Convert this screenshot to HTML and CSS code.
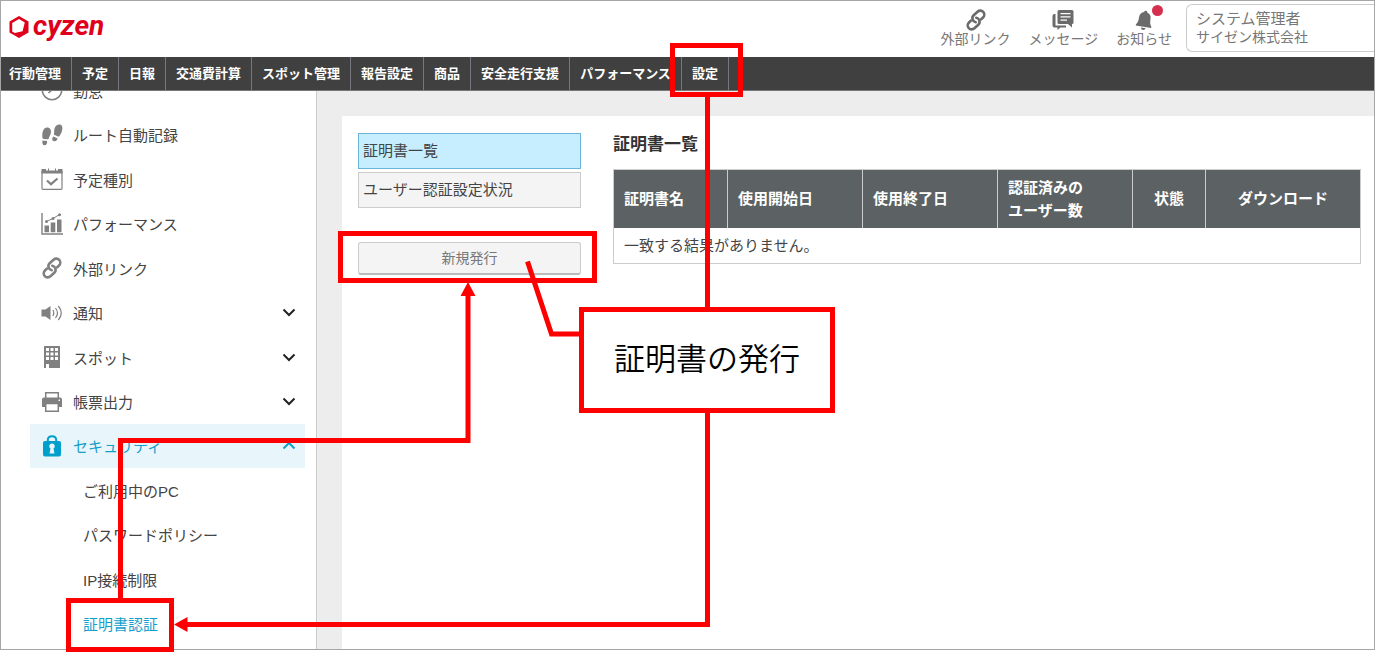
FILE: index.html
```html
<!DOCTYPE html>
<html lang="ja">
<head>
    <meta charset="UTF-8">
    <meta name="viewport" content="width=device-width, initial-scale=1.0">
    <title>cyzen</title>
    <link rel="stylesheet" href="styles.css">
</head>
<body>
    <!-- Shared icons -->
    <svg class="defs" width="0" height="0">
        <symbol id="icon-link" viewBox="0 0 22 22">
            <g fill="none" stroke="currentColor" stroke-width="2.600" stroke-linecap="round" transform="translate(11 11) rotate(-43)">
                <path d="M4.300 3H6.800A4 4 0 0 0 6.800 -5H1.500A4 4 0 0 0 -1.700 1.400"/>
                <path d="M-4.300 -3H-6.800A4 4 0 0 0 -6.800 5H-1.500A4 4 0 0 0 1.700 -1.400"/>
            </g>
        </symbol>
        <symbol id="icon-down" viewBox="0 0 14 9">
            <path d="M1.500 1.500l5.500 5.500 5.500-5.500" fill="none" stroke="currentColor" stroke-width="2"/>
        </symbol>
    </svg>

    <div class="page">
        <header class="header">
            <a class="logo" href="#">
                <svg width="20" height="22" viewBox="0 0 20 22">
                    <path fill="currentColor" fill-rule="evenodd" d="M10 0l9.500 5.500v11L10 22 .5 16.500v-11zM10 3L3.200 7v8.600l2.600 1.500 7.800-1.800 2.200-8.700z"/>
                </svg>
                <span>cyzen</span>
            </a>
            <div class="tools">
                <a class="tool" href="#">
                    <svg width="22" height="22"><use href="#icon-link"/></svg>
                    <span>外部リンク</span>
                </a>
                <a class="tool" href="#">
                    <svg width="22" height="22" viewBox="0 0 22 22">
                        <path fill="currentColor" d="M2 5h1.500v11.500H14v2H8.500L5.500 21v-2.500H2.500Q.5 18.500.5 16.500v-9Q.5 5 2 5z"/>
                        <path fill="currentColor" fill-rule="evenodd" d="M7 1h13q1.500 0 1.500 1.500v11q0 1.500-1.500 1.500v3.500L16 15H7q-1.500 0-1.500-1.500v-11Q5.500 1 7 1zM8.500 4v1.300h10V4zm0 3.200v1.300h10V7.200zm0 3.200v1.300h6.500v-1.300z"/>
                    </svg>
                    <span>メッセージ</span>
                </a>
                <a class="tool" href="#">
                    <svg width="22" height="22" viewBox="0 0 22 22">
                        <g fill="currentColor" transform="rotate(9 11 11)">
                            <path d="M11.500 1.500q1.500 0 1.600 1.600c3 .8 4.200 3 4.200 6 0 4 .4 5.500 2 7.400v1.200H3.700v-1.200c1.600-1.900 2-3.400 2-7.400 0-3 1.200-5.200 4.200-6q.1-1.600 1.600-1.600z"/>
                            <path d="M9 18.800h5q-.6 2.200-2.500 2.200T9 18.800z"/>
                        </g>
                    </svg>
                    <span>お知らせ</span>
                    <i class="dot"></i>
                </a>
                <a class="user" href="#">
                    <span class="user-name">システム管理者</span>
                    <span>サイゼン株式会社</span>
                </a>
            </div>
        </header>

        <nav class="nav">
            <a href="#">行動管理</a>
            <a href="#">予定</a>
            <a href="#">日報</a>
            <a href="#">交通費計算</a>
            <a href="#">スポット管理</a>
            <a href="#">報告設定</a>
            <a href="#">商品</a>
            <a href="#">安全走行支援</a>
            <a href="#">パフォーマンス</a>
            <a href="#">設定</a>
        </nav>

        <div class="body">
            <aside class="sidebar">
                <ul class="menu">
                    <li><a class="row" href="#">
                        <svg class="icon" viewBox="0 0 22 22"><g fill="none" stroke="currentColor" stroke-width="1.600"><circle cx="11" cy="11" r="9.700"/><path d="M11 4v7.500M7.500 14l5-4.500"/></g></svg>
                        <span>勤怠</span>
                    </a></li>
                    <li><a class="row" href="#">
                        <svg class="icon" viewBox="0 0 22 22"><g fill="currentColor">
                            <path d="M5.500 3.600c2.600-.5 4.600 1.200 4.500 4.200-.1 2.600-1.500 4.300-2.300 6.600-.2.800-1 1-1.800.9l-3.200-.4c-.9-.1-1.300-.7-1.300-1.500C1 9.500 1.800 4.400 5.500 3.600z"/>
                            <path d="M1.500 16.500l4.600.6c.3 2.600-.7 4.300-2.500 4.200-1.900-.1-2.600-2-2.100-4.800z"/>
                            <path d="M18.300.4c2.500-.1 3.400 2.200 3 5.200-.3 2.600-1.500 4.400-2.800 6.300-.4.700-1 .8-1.700.5l-3-1.300c-.8-.3-1-.9-.8-1.700.5-1.900-.1-3.200.6-5.200.7-2.200 2.600-3.700 4.700-3.800z"/>
                            <path d="M12.200 12.400l4.300 1.900c-.4 2.500-2 3.500-3.900 2.800-1.700-.8-1.800-2.600-.4-4.700z"/>
                        </g></svg>
                        <span>ルート自動記録</span>
                    </a></li>
                    <li><a class="row" href="#">
                        <svg class="icon" viewBox="0 0 22 22">
                            <path d="M1 3v17.500q0 .8.800.8h18.400q.8 0 .8-.8V3" fill="none" stroke="currentColor" stroke-width="1.200"/>
                            <path d="M.5 1H5v1.500h2V.5h1v2h6v-2h1v2h2V1h4.500v4.500H.5z" fill="currentColor"/>
                            <path d="M6 12.500l4 3.700 6.500-5.700" fill="none" stroke="currentColor" stroke-width="2.200"/>
                        </svg>
                        <span>予定種別</span>
                    </a></li>
                    <li><a class="row" href="#">
                        <svg class="icon" viewBox="0 0 22 22">
                            <path d="M1 0v21h21" fill="none" stroke="currentColor" stroke-width="1.400"/>
                            <path d="M3.500 12.500H8v6.800H3.500zM9.700 9.500h4.600v9.800H9.700zM16 6.500h4.500v12.800H16z" fill="currentColor"/>
                            <path d="M5.500 8.500L12 5.500l6.500-4" fill="none" stroke="currentColor"/>
                            <g fill="currentColor"><circle cx="5.500" cy="8.500" r="1.500"/><circle cx="12" cy="5.500" r="1.500"/><circle cx="18.500" cy="1.700" r="1.500"/></g>
                        </svg>
                        <span>パフォーマンス</span>
                    </a></li>
                    <li><a class="row" href="#">
                        <svg class="icon"><use href="#icon-link"/></svg>
                        <span>外部リンク</span>
                    </a></li>
                    <li><button class="row" type="button">
                        <svg class="icon" viewBox="0 0 22 22">
                            <path d="M.5 7.500h4l5-3.500v14l-5-3.500h-4z" fill="currentColor"/>
                            <path d="M11.800 8q2 3 0 6M14.500 6q4 5 0 10M17.300 4q6 7 0 14" fill="none" stroke="currentColor" stroke-width="1.200"/>
                        </svg>
                        <span>通知</span>
                        <svg class="arrow"><use href="#icon-down"/></svg>
                    </button></li>
                    <li><button class="row" type="button">
                        <svg class="icon" viewBox="0 0 22 22">
                            <path fill="currentColor" fill-rule="evenodd" d="M3 0h16v22H8v-4H5v4H3zM5 2v3h3V2zm4.500 0v3h3V2zM14 2v3h3V2zM5 6.500v3h3v-3zm4.500 0v3h3v-3zm4.500 0v3h3v-3zM5 11v3h3v-3zm4.500 0v3h3v-3zm4.500 0v3h3v-3z"/>
                        </svg>
                        <span>スポット</span>
                        <svg class="arrow"><use href="#icon-down"/></svg>
                    </button></li>
                    <li><button class="row" type="button">
                        <svg class="icon" viewBox="0 0 22 22">
                            <path d="M4.700 1.700h12.600v6H4.700z" fill="#fff" stroke="currentColor" stroke-width="1.500"/>
                            <path fill="currentColor" fill-rule="evenodd" d="M1 8.500q0-2 2-2h16q2 0 2 2V16H1zM17.500 8.500V10H19V8.500z"/>
                            <path d="M4.700 12.500h12.600v7.800H4.700z" fill="#fff" stroke="currentColor" stroke-width="1.500"/>
                        </svg>
                        <span>帳票出力</span>
                        <svg class="arrow"><use href="#icon-down"/></svg>
                    </button></li>
                    <li><button class="row open" type="button">
                        <svg class="icon" viewBox="0 0 22 22">
                            <path d="M6.800 7V5Q6.800 1.200 11 1.200T15.200 5v2" fill="none" stroke="currentColor" stroke-width="2"/>
                            <path fill="currentColor" fill-rule="evenodd" d="M4 6h14q2 0 2 2v11.500q0 2-2 2H4q-2 0-2-2V8q0-2 2-2zM11 8.500a2.700 2.700 0 0 0-1.500 5L8.500 18.500h5l-1-5a2.700 2.700 0 0 0-1.500-5z"/>
                        </svg>
                        <span>セキュリティ</span>
                        <svg class="arrow up"><use href="#icon-down"/></svg>
                    </button></li>
                    <li><a class="row sub" href="#">ご利用中のPC</a></li>
                    <li><a class="row sub" href="#">パスワードポリシー</a></li>
                    <li><a class="row sub" href="#">IP接続制限</a></li>
                    <li><a class="row sub current" href="#">証明書認証</a></li>
                </ul>
            </aside>

            <main class="content">
                <div class="panel">
                    <div class="side">
                        <a class="tab active" href="#">証明書一覧</a>
                        <a class="tab" href="#">ユーザー認証設定状況</a>
                        <button class="new-button" type="button">新規発行</button>
                    </div>
                    <section class="list">
                        <h1>証明書一覧</h1>
                        <table>
                            <thead>
                                <tr>
                                    <th class="col-name">証明書名</th>
                                    <th class="col-date">使用開始日</th>
                                    <th class="col-date">使用終了日</th>
                                    <th class="col-date">認証済みの<br>ユーザー数</th>
                                    <th class="col-state">状態</th>
                                    <th class="col-download">ダウンロード</th>
                                </tr>
                            </thead>
                            <tbody>
                                <tr><td colspan="6">一致する結果がありません。</td></tr>
                            </tbody>
                        </table>
                    </section>
                </div>
            </main>
        </div>
    </div>

    <!-- Guide lines laid over the screen -->
    <svg class="guide" width="1376" height="652" viewBox="0 0 1376 652">
        <g fill="none" stroke="#f00" stroke-width="5">
            <rect x="672.500" y="45.500" width="68" height="49"/>
            <rect x="340.500" y="233.500" width="254" height="47"/>
            <rect x="68.500" y="600.500" width="103" height="49"/>
            <path d="M707.500 97v212M707.500 410v214.500H186"/>
            <path d="M120.500 600V440.500h347.500V295"/>
            <path d="M527.500 261.500l24 72.500H582"/>
        </g>
        <path d="M174 624.500l13.500-7.500v15zM468 282l7.500 14h-15z" fill="#f00"/>
    </svg>
    <div class="callout">証明書の発行</div>
</body>
</html>
```
FILE: styles.css
```css
* {
    box-sizing: border-box;
}

body {
    margin: 0;
    min-height: 100vh;
    font-family: "Liberation Sans", "Noto Sans CJK JP", sans-serif;
    font-size: 15px;
    color: #444;
    background: #fff;
    position: relative;
}

a {
    color: inherit;
    text-decoration: none;
}

button {
    font: inherit;
    color: inherit;
    cursor: pointer;
}

.defs {
    position: absolute;
}

.page {
    display: flex;
    flex-direction: column;
    min-height: calc(100vh - 2px);
    margin-right: 1px;
    border: 1px solid #a6a6a6;
}

/* Header */
.header {
    display: flex;
    justify-content: space-between;
    height: 56px;
}

.logo {
    display: flex;
    align-items: center;
    gap: 4px;
    padding: 0 0 4px 8px;
    color: #e0001b;
    font: italic 700 28px/28px Roboto, sans-serif;
}

.logo span {
    padding-bottom: 2px;
}

.tools {
    display: flex;
    color: #777;
    font-size: 14px;
}

.tool {
    position: relative;
    display: flex;
    flex-direction: column;
    align-items: center;
    margin-right: 18px;
    padding-top: 8px;
    line-height: 16px;
}

.tool svg {
    color: #6b6b6b;
}

.tool:nth-child(3) {
    margin-right: 14px;
}

.dot {
    position: absolute;
    top: 4px;
    right: 9px;
    width: 11px;
    height: 11px;
    border-radius: 50%;
    background: #d6304f;
}

.user {
    width: 188px;
    height: 48px;
    margin-top: 3px;
    padding: 5px 9px;
    border: 1px solid #ccc;
    border-right: none;
    border-radius: 6px 0 0 6px;
    line-height: 18px;
}

.user span {
    display: block;
}

.user-name {
    font-size: 15px;
}

/* Top navigation */
.nav {
    display: flex;
    height: 34px;
    background: #404040;
    border-bottom: 1px solid #777;
}

.nav a {
    padding: 0 10px;
    border-right: 1px solid #77777f;
    color: #fff;
    font-size: 13px;
    font-weight: bold;
    line-height: 33px;
}

.nav a:first-child {
    padding-left: 8px;
}

.body {
    flex: 1;
    display: flex;
}

/* Sidebar */
.sidebar {
    width: 316px;
    display: flex;
    overflow: hidden;
    border-right: 1px solid #ccc;
}

.menu {
    flex: 1;
    display: flex;
    flex-direction: column;
    margin: -23px 11px 3px 29px; /* scrolled half a row */
    padding: 0;
    list-style: none;
}

.menu li {
    flex: 1;
    display: flex;
    min-height: 44px;
}

.row {
    flex: 1;
    display: flex;
    align-items: center;
    gap: 10px;
    padding: 0 9px 0 11px;
    border: none;
    background: none;
    text-align: left;
}

.row.open {
    background: #e8f5fb;
    color: #149fcb;
}

.row.sub {
    padding-left: 53px;
}

.row.current {
    color: #149fcb;
}

.icon {
    width: 22px;
    height: 22px;
    color: #808080;
}

.open .icon {
    color: #009fcc;
}

.arrow {
    width: 14px;
    height: 9px;
    margin-left: auto;
    color: #222;
}

.arrow.up {
    color: #149fcb;
    transform: rotate(180deg);
}

/* Content */
.content {
    flex: 1;
    display: flex;
    padding: 25px 0 0 25px;
    background: #ededed;
}

.panel {
    flex: 1;
    display: flex;
    gap: 32px;
    padding: 17px 13px 17px 16px;
    background: #fff;
}

.side {
    width: 223px;
    display: flex;
    flex-direction: column;
    gap: 3px;
}

.tab {
    padding: 0 4px;
    border: 1px solid #ccc;
    background: #f4f4f4;
    line-height: 34px;
}

.tab.active {
    border-color: #6bb4da;
    background: #c6eeff;
}

.new-button {
    height: 33px;
    margin-top: 31px;
    padding: 0 0 2px;
    border: 1px solid #ccc;
    border-bottom: 2px solid #bbb;
    border-radius: 3px;
    background: #f4f4f4;
    color: #777;
    font-size: 14px;
}

.list {
    flex: 1;
}

h1 {
    margin: 0 0 13px;
    padding-top: 1px;
    color: #333;
    font-size: 17px;
    line-height: 22px;
}

table {
    width: 100%;
    table-layout: fixed;
    border-collapse: collapse;
    border: 1px solid #ccc;
}

th {
    height: 58px;
    padding: 0 10px;
    border: 1px solid #ccc;
    border-bottom: none;
    background: #5c6264;
    color: #fff;
    text-align: left;
    line-height: 23px;
}

td {
    height: 36px;
    padding: 0 10px 2px;
}

.col-name {
    width: 114px;
}

.col-date {
    width: 135px;
}

.col-state {
    width: 73px;
    text-align: center;
}

.col-download {
    text-align: center;
}

/* Guide overlay */
.guide {
    position: absolute;
    top: 0;
    left: 0;
    pointer-events: none;
}

.callout {
    position: absolute;
    top: 307px;
    left: 579px;
    padding: 24px 30px;
    border: 5px solid #f00;
    background: #fff;
    color: #000;
    font-size: 31px;
    font-weight: 350;
    line-height: 48px;
}
```
